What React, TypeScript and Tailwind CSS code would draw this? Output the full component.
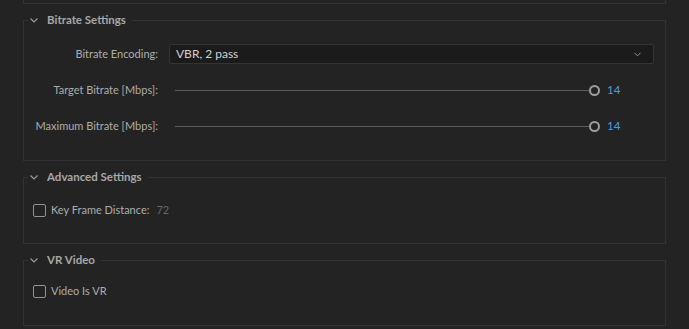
import { ChevronDown } from "lucide-react";

const FONT = { fontFamily: "Lato, 'Open Sans', sans-serif" };

function Chevron() {
  return (
    <svg width="8" height="5" viewBox="0 0 8 5" className="shrink-0">
      <path d="M0.5 0.5 L4 4 L7.5 0.5" fill="none" stroke="#9c9c9c" strokeWidth="1.1" />
    </svg>
  );
}

function Group({ title, children, className }: { title: string; children: React.ReactNode; className?: string }) {
  return (
    <fieldset className={"mx-[23px] border border-[#333333] " + (className ?? "")}>
      <legend className="ml-[4px] flex h-[16px] items-center pl-[2px] pr-[6px]">
        <Chevron />
        <span className="ml-[9px] text-[11.5px] font-bold leading-[16px] text-[#a8a8a8]">{title}</span>
      </legend>
      {children}
    </fieldset>
  );
}

function SliderRow({ label, value }: { label: string; value: number }) {
  return (
    <div className="flex h-[20px] items-center">
      <div className="w-[134px] text-right text-[11px] text-[#adadad]">{label}</div>
      <div className="ml-[11px] flex w-[485px] items-center pl-[6px]">
        <div className="h-px flex-1 bg-[#5c5c5c]" />
        <div className="h-[11px] w-[11px] rounded-full border-2 border-[#9e9e9e]" />
        <div className="ml-[7px] w-[47px] text-[11.5px] text-[#4a9de6]">{value}</div>
      </div>
    </div>
  );
}

function Check({ label, extra }: { label: string; extra?: string }) {
  return (
    <div className="flex h-[16px] items-center pl-[9px]">
      <div className="h-[13px] w-[13px] rounded-[2px] border-[1.5px] border-[#939393]" />
      <span className="ml-[5px] text-[11px] text-[#adadad]">{label}</span>
      {extra && <span className="ml-[7px] text-[11px] text-[#666666]">{extra}</span>}
    </div>
  );
}

export default function App() {
  return (
    <div className="h-[329px] w-[689px] overflow-hidden bg-[#232323]" style={FONT}>
      <div className="mx-[23px] h-[4px] border-x border-b border-[#333333]" />

      <Group title="Bitrate Settings" className="mt-[8px] pb-[24px] pt-[16px]">
        <div className="flex flex-col gap-[16px]">
          <div className="flex h-[20px] items-center">
            <div className="w-[134px] text-right text-[11px] text-[#adadad]">Bitrate Encoding:</div>
            <div className="ml-[11px] flex h-[20px] w-[485px] items-center justify-between rounded-[2px] border border-[#343434] bg-[#1b1b1b] pl-[6px] pr-[10px]">
              <span className="text-[12px] text-[#d2d2d2]">VBR, 2 pass</span>
              <ChevronDown size={11} strokeWidth={2} color="#a0a0a0" />
            </div>
          </div>
          <SliderRow label="Target Bitrate [Mbps]:" value={14} />
          <SliderRow label="Maximum Bitrate [Mbps]:" value={14} />
        </div>
      </Group>

      <Group title="Advanced Settings" className="mt-[8px] pb-[25px] pt-[17px]">
        <Check label="Key Frame Distance:" extra="72" />
      </Group>

      <Group title="VR Video" className="mt-[8px] pb-[26px] pt-[15px]">
        <Check label="Video Is VR" />
      </Group>
    </div>
  );
}
